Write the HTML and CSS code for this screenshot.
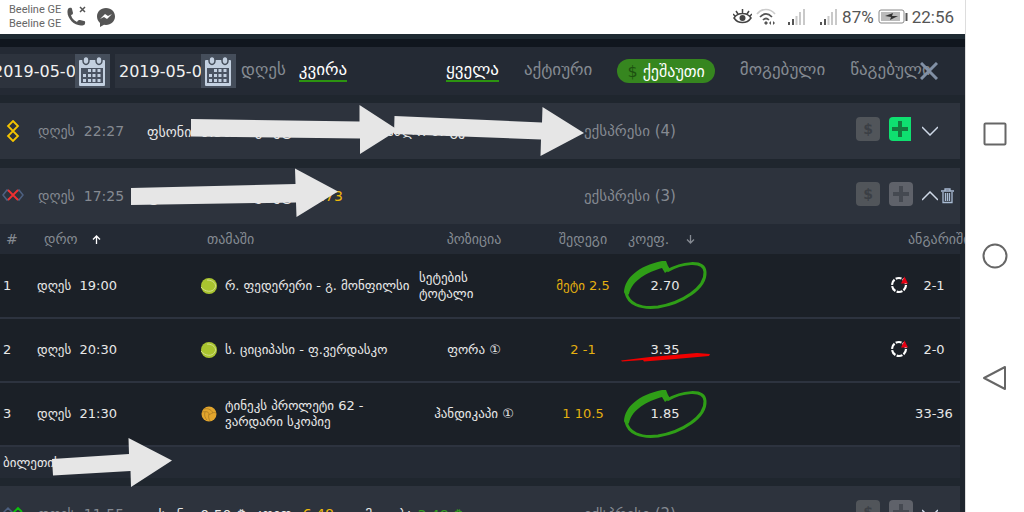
FILE: index.html
```html
<!DOCTYPE html>
<html lang="ka">
  <head>
    <meta charset="UTF-8" />
    <meta name="viewport" content="width=device-width, initial-scale=1.0" />
    <title>ფსონების ისტორია</title>
    <link rel="stylesheet" href="styles.css">
  </head>
  <body>
    <svg class="defs" width="0" height="0">
      <symbol id="calendar" viewBox="0 0 30 31">
        <rect x="2" y="4" width="26" height="26" rx="1" fill="#c3d0e0" />
        <rect x="4" y="12" width="22" height="15" fill="#4a5362" />
        <g fill="#c3d0e0">
          <path d="M11 13h3v3h-3zM15.500 13h3v3h-3zM20.500 13h3v3h-3zM6 18h3v3H6zM11 18h3v3h-3zM15.500 18h3v3h-3zM20.500 18h3v3h-3zM6 23h3v3H6zM11 23h3v3h-3zM15.500 23h3v3h-3zM20.500 23h3v3h-3z" />
        </g>
        <g fill="#c3d0e0" stroke="#454e5b" stroke-width="1.500">
          <ellipse cx="9" cy="4.500" rx="3" ry="4" />
          <ellipse cx="22" cy="4.500" rx="3" ry="4" />
        </g>
      </symbol>
      <symbol id="signal" viewBox="0 0 18 18">
        <path d="M0 14h2v3H0zM4 11h2v6H4z" fill="#555" />
        <path d="M7.500 8h2v9h-2zM11 4h2v13h-2zM15 1h2v16h-2z" fill="#c9c9c9" />
      </symbol>
      <symbol id="plus" viewBox="0 0 24 24">
        <path d="M12 4v16M4 12h16" fill="none" stroke="currentColor" stroke-width="4" />
      </symbol>
      <symbol id="tennis" viewBox="0 0 16 16">
        <circle cx="8" cy="8" r="8" fill="#a9c42f" />
        <path d="M0 9c4 5 11 6 14 1 2-4-2-8-8-8" fill="none" stroke="#d3de8c" />
      </symbol>
      <symbol id="volley" viewBox="0 0 16 16">
        <circle cx="8" cy="8" r="7.500" fill="#e2a52d" />
        <path d="M1 6c4-1 7 0 7 2s4-3 7-1M8 8c-1 3 0 5 1 7M3 3c3-1 7 0 9 4M4 6c-1 3 0 6 2 8" fill="none" stroke="#a87a22" stroke-width="0.800" />
      </symbol>
      <symbol id="live" viewBox="0 0 18 20">
        <circle cx="9" cy="11" r="7" fill="none" stroke="#fff" stroke-width="2.200" stroke-dasharray="6 1.330" />
        <path d="M14.500 2.500l3.500 7h-7z" fill="#e60012" />
      </symbol>
      <symbol id="ring" viewBox="0 0 86 52">
        <path d="M43 11C57 3 80 -1 81 12C82 28 58 43 34 47C16 49 4 44 2 32" fill="none" stroke="#2f9e17" stroke-width="3" />
        <path d="M0 32C1 18 14 6 38 1L42 1L44 6L46 9L41 13L38 8C24 12 8 20 5 34L2 36z" fill="#2f9e17" />
      </symbol>
    </svg>

    <div class="screen">
      <header class="status">
        <div class="carrier">Beeline GE<br />Beeline GE</div>
        <svg class="phone" width="22" height="22" viewBox="0 0 22 22">
          <path d="M2 3c2-2 4-1 4 0l1 4c0 1-1 2-2 2 1 4 3 5 6 7 1-2 2-2 3-2l4 1c2 0 1 4 0 4C9 22-1 11 2 3z" fill="#555" />
          <path d="M14 1l5 5M19 1l-5 5" stroke="#555" stroke-width="1.500" />
        </svg>
        <svg width="20" height="20" viewBox="0 0 20 20">
          <path d="M10 1c5.500 0 9 4 9 8.500S15 18 10 18l-2-.3L4 20v-4C2 14 1 12 1 9.500 1 5 4.500 1 10 1z" fill="#555" />
          <path d="M4 12l5-5 3 2 4-2-5 5-3-2z" fill="#fff" />
        </svg>
        <div class="status-right">
          <svg class="eye" width="19" height="18" viewBox="0 0 19 18">
            <path d="M1 10c4-6 13-6 17 0-4 6-13 6-17 0zM9.500 5V1M5 6L3 3M14 6l2-3M2 8L0 6M17 8l2-2" fill="none" stroke="#444" stroke-width="1.500" />
            <circle cx="9.500" cy="10" r="3" fill="#444" />
          </svg>
          <svg class="wifi" width="20" height="18" viewBox="0 0 20 18">
            <path d="M1 6C6 0 14 0 19 6" fill="none" stroke="#ccc" stroke-width="1.700" />
            <path d="M4 9c4-4 8-4 12 0M7 12c2-2 4-2 6 0" fill="none" stroke="#555" stroke-width="1.700" />
            <path d="M8 15l2-2 2 2-2 2zM13 15l2-2v4zM19 15l-2-2v4z" fill="#555" />
          </svg>
          <svg class="signal" width="18" height="18"><use href="#signal" /></svg>
          <svg width="18" height="18"><use href="#signal" /></svg>
          <span>87%</span>
          <svg width="30" height="16" viewBox="0 0 30 16">
            <rect x="1" y="1" width="25" height="13" rx="2" fill="#fff" stroke="#888" />
            <rect x="3" y="3" width="19" height="9" fill="#bbb" />
            <path d="M7 7l8-3-1 3h6l-8 4 1-3z" fill="#333" />
            <path d="M28.500 4v8" stroke="#555" stroke-width="2" />
          </svg>
          <span>22:56</span>
        </div>
      </header>

      <main class="app">
        <div class="toolbar">
          <div class="date">
            <input type="text" value="2019-05-01" aria-label="დან" />
            <button aria-label="კალენდარი"><svg width="30" height="31"><use href="#calendar" /></svg></button>
          </div>
          <div class="date">
            <input type="text" value="2019-05-08" aria-label="მდე" />
            <button aria-label="კალენდარი"><svg width="30" height="31"><use href="#calendar" /></svg></button>
          </div>
          <nav class="period">
            <button class="tab">დღეს</button>
            <button class="tab active">კვირა</button>
          </nav>
          <nav class="filter">
            <button class="tab active">ყველა</button>
            <button class="tab">აქტიური</button>
            <button class="cashout"><span>$</span> ქეშაუთი</button>
            <button class="tab">მოგებული</button>
            <button class="tab">წაგებული</button>
          </nav>
          <button class="close" aria-label="დახურვა">
            <svg width="18" height="18" viewBox="0 0 18 18"><path d="M1 1l16 16M17 1L1 17" stroke="#8190a5" stroke-width="3" /></svg>
          </button>
        </div>

        <section class="bet">
          <div class="bet-head">
            <svg class="kind" width="26" height="22" viewBox="0 0 26 22">
              <path d="M13 1l5 5-10 10 5 5 5-5L8 6z" fill="none" stroke="#f5c400" stroke-width="1.800" />
            </svg>
            <div class="when">დღეს&nbsp; 22:27</div>
            <div class="stake">ფსონი&nbsp; 0.50 ₾</div>
            <div class="odds">კოეფ. <b>8.45</b></div>
            <div class="win">შესაძლო მოგება</div>
            <div class="type">ექსპრესი (4)</div>
            <button class="sq">$</button>
            <button class="sq add" aria-label="დამატება"><svg width="24" height="24"><use href="#plus" /></svg></button>
            <button class="chev" aria-label="გახსნა"><svg width="16" height="10" viewBox="0 0 16 10"><path d="M0 1l8 8 8-8" fill="none" stroke="#cfd9e8" stroke-width="1.500" /></svg></button>
          </div>
        </section>

        <section class="bet open">
          <div class="bet-head">
            <svg class="kind" width="26" height="22" viewBox="0 0 26 22">
              <path d="M9 6L7 5 3 10l4 5 2-1M17 6l2-1 4 5-4 5-2-1" fill="none" stroke="#4d6080" stroke-width="1.500" />
              <path d="M8 5l10 10M18 5L8 15" stroke="#f03030" stroke-width="1.800" />
            </svg>
            <div class="when">დღეს&nbsp; 17:25</div>
            <div class="stake">ფსონი&nbsp; 0.50 ₾</div>
            <div class="odds">კოეფ. <b>16.73</b></div>
            <div class="win"></div>
            <div class="type">ექსპრესი (3)</div>
            <button class="sq">$</button>
            <button class="sq" aria-label="დამატება"><svg width="24" height="24"><use href="#plus" /></svg></button>
            <button class="chev" aria-label="დაკეცვა"><svg width="16" height="10" viewBox="0 0 16 10"><path d="M0 9l8-8 8 8" fill="none" stroke="#cfd9e8" stroke-width="1.500" /></svg></button>
            <button class="trash" aria-label="წაშლა">
              <svg width="13" height="16" viewBox="0 0 13 16"><path d="M0 3h13M4 3V1h5v2M2 4v10.500h9V4M4.500 5v8M6.500 5v8M8.500 5v8" fill="none" stroke="#a9bbd3" stroke-width="1.300" /></svg>
            </button>
          </div>
          <table>
            <thead>
              <tr>
                <th class="c-num">#</th>
                <th class="c-time">დრო <svg class="sort up" width="9" height="9" viewBox="0 0 9 9"><path d="M4.500 9V1M1 4.500L4.500 1 8 4.500" /></svg></th>
                <th class="c-game">თამაში</th>
                <th class="c-pos">პოზიცია</th>
                <th class="c-res">შედეგი</th>
                <th class="c-coef">კოეფ. <svg class="sort down" width="9" height="9" viewBox="0 0 9 9"><path d="M4.500 0v8M1 4.500L4.500 8 8 4.500" /></svg></th>
                <th class="c-live"></th>
                <th class="c-score">ანგარიში</th>
              </tr>
            </thead>
            <tbody>
              <tr>
                <td class="num">1</td>
                <td>დღეს&nbsp; 19:00</td>
                <td><div class="game"><svg width="16" height="16"><use href="#tennis" /></svg><span>რ. ფედერერი - გ. მონფილსი</span></div></td>
                <td>სეტების<br />ტოტალი</td>
                <td class="res">მეტი 2.5</td>
                <td class="mid">2.70</td>
                <td class="live"><svg width="18" height="20"><use href="#live" /></svg></td>
                <td class="mid">2-1</td>
              </tr>
              <tr>
                <td class="num">2</td>
                <td>დღეს&nbsp; 20:30</td>
                <td><div class="game"><svg width="16" height="16"><use href="#tennis" /></svg><span>ს. ციციპასი - ფ.ვერდასკო</span></div></td>
                <td class="pos">ფორა ①</td>
                <td class="res">2 -1</td>
                <td class="mid">3.35</td>
                <td class="live"><svg width="18" height="20"><use href="#live" /></svg></td>
                <td class="mid">2-0</td>
              </tr>
              <tr>
                <td class="num">3</td>
                <td>დღეს&nbsp; 21:30</td>
                <td><div class="game"><svg width="16" height="16"><use href="#volley" /></svg><span>ტინეკს პროლეტი 62 -<br />ვარდარი სკოპიე</span></div></td>
                <td class="pos">ჰანდიკაპი ①</td>
                <td class="res">1 10.5</td>
                <td class="mid">1.85</td>
                <td></td>
                <td class="mid">33-36</td>
              </tr>
            </tbody>
          </table>
          <div class="ticket">ბილეთის</div>
        </section>

        <section class="bet">
          <div class="bet-head">
            <svg class="kind" width="26" height="22" viewBox="0 0 26 22">
              <path d="M3 10l5-5 5 5 5 5 5-5M3 10l5 5 5-5" fill="none" stroke="#4d6080" stroke-width="1.500" />
              <path d="M11 12l7-7 4 4" fill="none" stroke="#0cc20c" stroke-width="1.800" />
            </svg>
            <div class="when">დღეს&nbsp; 11:55</div>
            <div class="stake">ფსონი&nbsp; 0.50 ₾</div>
            <div class="odds">კოეფ. <b>6.48</b></div>
            <div class="win">მოგება <i>3.48 ₾</i></div>
            <div class="type">ექსპრესი (2)</div>
            <button class="sq">$</button>
            <button class="sq" aria-label="დამატება"><svg width="24" height="24"><use href="#plus" /></svg></button>
            <button class="chev" aria-label="გახსნა"><svg width="16" height="10" viewBox="0 0 16 10"><path d="M0 1l8 8 8-8" fill="none" stroke="#cfd9e8" stroke-width="1.500" /></svg></button>
          </div>
        </section>
      </main>

      <!-- hand-drawn marks over the list -->
      <svg class="marks" width="960" height="512" viewBox="0 0 960 512">
        <g fill="#e6e6e6">
          <path d="M191 119L359.500 121.500V105L398 130L360 154V138.500L191 136.500z" />
          <path d="M394.500 116L542 122.500L542.500 107L584 133L540.500 156L541 139.500L394 134z" />
          <path d="M131 188L295.500 184L295 168.500L338 191.500L296.500 217L296 202.500L131 205z" />
          <path d="M52 459L129 454L128.500 438L172 460.500L131 487L130.500 471L53 475.500z" />
        </g>
        <use href="#ring" x="624" y="260" width="86" height="52" />
        <use href="#ring" x="624" y="389" width="86" height="52" />
        <path d="M621 360.500L650 357L697 353L710 354L709 356L675 359L644 361.500L643 360L622 361.500z" fill="#f00000" />
      </svg>
    </div>

    <aside class="softkeys">
      <button aria-label="Recent"><svg width="26" height="26" viewBox="0 0 26 26"><rect x="2.500" y="2.500" width="21" height="21" rx="1" /></svg></button>
      <button aria-label="Home"><svg width="26" height="26" viewBox="0 0 26 26"><circle cx="13" cy="13" r="11.500" /></svg></button>
      <button aria-label="Back"><svg width="26" height="26" viewBox="0 0 26 26"><path d="M23 2v22L2 13z" stroke-linejoin="round" /></svg></button>
    </aside>
  </body>
</html>
```
FILE: styles.css
```css
* {
  box-sizing: border-box;
}
body {
  display: flex;
  height: 100vh;
  margin: 0;
  background: #fff;
  color: #e8e8e8;
  font-family: "DejaVu Sans", sans-serif;
  font-size: 13px;
  overflow: hidden;
}
button {
  border: none;
  background: none;
  padding: 0;
  color: inherit;
  font: inherit;
  cursor: pointer;
}
svg {
  display: block;
  flex: none;
}
.defs {
  position: absolute;
}
.screen {
  position: relative;
  flex: 1;
  min-width: 0;
  display: flex;
  flex-direction: column;
  overflow: hidden;
}
.status {
  display: flex;
  align-items: center;
  height: 34px;
  flex: none;
  padding: 0 11px 0 9px;
  color: #555;
  font-family: Roboto, sans-serif;
}
.carrier {
  font-size: 11px;
  line-height: 14px;
  color: #666;
  margin-right: 5px;
}
.phone {
  margin-right: 8px;
}
.status-right {
  display: flex;
  align-items: center;
  gap: 4px;
  margin-left: auto;
  font-size: 17px;
}
.signal {
  margin: 0 10px 0 8px;
}
.app {
  flex: 1;
  min-height: 0;
  overflow: hidden;
  background: #1f262e;
  border-top: 5px solid #1e2a32;
}
.toolbar {
  display: flex;
  align-items: center;
  height: 56px;
  border-top: 8px solid #10161e;
  background: #242a34;
  overflow: hidden;
}
.date {
  display: flex;
  flex: none;
  height: 34px;
  margin-right: 5px;
}
.date:first-child {
  margin-left: -11px;
}
.date input {
  width: 86px;
  padding: 0 0 0 4px;
  border: none;
  border-radius: 0;
  background: #2d333d;
  color: #f0f0f0;
  font-family: "DejaVu Sans", sans-serif;
  font-size: 16px;
}
.date button {
  width: 35px;
  padding-left: 2px;
  background: #454e5b;
}
.period,
.filter {
  display: flex;
  align-items: center;
  flex: none;
}
.period {
  gap: 13px;
  width: 205px;
}
.filter {
  gap: 25px;
}
.tab {
  height: 23px;
  margin-bottom: 2px;
  border-bottom: 2px solid transparent;
  color: #858a92;
  font-size: 17px;
  line-height: 21px;
  white-space: nowrap;
}
.tab.active {
  color: #fff;
  border-color: #2c9410;
}
.cashout {
  height: 24px;
  padding: 0 10px;
  border-radius: 12px;
  background: #36861f;
  color: #fff;
  font-size: 16px;
  white-space: nowrap;
}
.cashout span {
  color: #1d5210;
}
.close {
  position: absolute;
  right: 27px;
}
.bet {
  margin: 8px 5px 0 0;
}
.bet.open {
  margin-top: 9px;
}
.bet-head {
  display: flex;
  align-items: center;
  height: 56px;
  background: #2d333d;
  white-space: nowrap;
  font-size: 14px;
}
.kind {
  margin-right: 12px;
}
.when {
  width: 109px;
  color: #858a92;
}
.stake {
  width: 108px;
}
.odds {
  width: 110px;
}
.odds b {
  margin-left: 2px;
  font-weight: 400;
  color: #f0b90b;
}
.win {
  width: 219px;
}
.win i {
  font-style: normal;
  color: #36a01f;
}
.type {
  flex: 1;
  color: #858a92;
  font-size: 15px;
}
.sq {
  display: flex;
  align-items: center;
  justify-content: center;
  width: 24px;
  height: 24px;
  margin-right: 9px;
  margin-bottom: 4px;
  border-radius: 4px;
  background: #51555a;
  color: #3b3f45;
  font-weight: 700;
}
.sq + .sq {
  background: #5f626a;
  color: #454951;
}
.sq + .sq.add {
  margin-right: 11px;
  width: 22px;
  border-radius: 4px 0 0 4px;
  background: #0fe070;
  color: #14793f;
}
.chev {
  width: 16px;
  margin-right: 3px;
}
.chev:last-child {
  margin-right: 22px;
}
.trash {
  margin-right: 6px;
}
table {
  width: 100%;
  table-layout: fixed;
  border-collapse: collapse;
  background: #1b2027;
}
thead {
  background: #242a34;
}
th {
  height: 30px;
  padding: 0;
  color: #858a92;
  font-size: 14px;
  font-weight: 400;
  line-height: 16px;
  text-align: left;
  white-space: nowrap;
}
td {
  height: 64px;
  padding: 0;
  border-bottom: 2px solid #2d333f;
  line-height: 16px;
}
.c-num {
  width: 37px;
  padding-left: 6px;
}
.c-time {
  width: 164px;
  padding-left: 7px;
}
.sort {
  display: inline-block;
  fill: none;
  stroke: #858a92;
  stroke-width: 1.3;
}
.up {
  margin-left: 10px;
  stroke: #fff;
}
.down {
  margin-left: 12px;
}
.c-game {
  width: 218px;
  padding-left: 6px;
}
.c-pos {
  width: 110px;
  text-align: center;
}
.c-res {
  width: 99px;
  padding-left: 9px;
  text-align: center;
}
.c-coef {
  width: 74px;
}
.c-score {
  width: 52px;
}
.num {
  padding-left: 3px;
}
.game {
  display: flex;
  align-items: center;
  gap: 8px;
  white-space: nowrap;
}
.pos,
.mid {
  text-align: center;
}
.res {
  padding-left: 9px;
  text-align: center;
  color: #e5b010;
}
.live svg {
  margin: 0 0 4px auto;
}
.ticket {
  height: 31px;
  padding-left: 3px;
  line-height: 31px;
  background: #242a34;
}
.marks {
  position: absolute;
  top: 0;
  left: 0;
}
.softkeys {
  display: flex;
  flex-direction: column;
  align-items: center;
  justify-content: center;
  gap: 96px;
  width: 59px;
  border-left: 1px solid #ddd;
}
.softkeys svg {
  fill: none;
  stroke: #666;
  stroke-width: 2;
}
```
